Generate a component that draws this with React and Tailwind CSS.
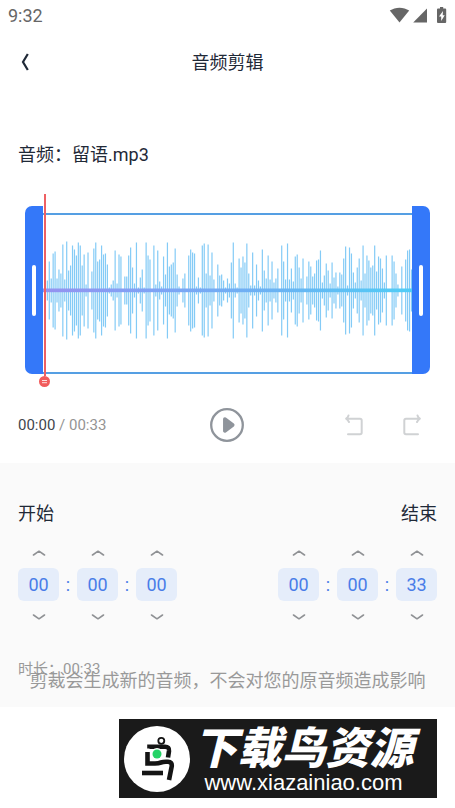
import { useState } from 'react';

// Half-heights of the waveform bars, from the middle line outwards
const WAVE = [
    40, 10, 29, 12, 37, 39, 12, 21, 17, 46, 11, 49, 20, 25, 45, 41, 35, 48, 45, 25,
    36, 6, 38, 1, 19, 42, 48, 29, 31, 45, 36, 37, 26, 3, 6, 10, 40, 7, 36, 34,
    1, 14, 14, 35, 43, 23, 7, 48, 3, 13, 21, 3, 48, 35, 31, 1, 45, 6, 40, 9,
    4, 34, 16, 48, 24, 26, 28, 42, 16, 4, 1, 12, 17, 1, 35, 41, 38, 37, 4, 13,
    3, 45, 47, 17, 46, 15, 38, 11, 1, 26, 15, 16, 10, 3, 12, 7, 28, 48, 7, 3,
    32, 23, 34, 28, 47, 17, 5, 38, 5, 26, 10, 4, 41, 20, 12, 35, 11, 29, 8, 12,
    22, 1, 45, 29, 11, 47, 11, 22, 9, 34, 36, 23, 12, 32, 1, 14, 29, 24, 14, 17,
    30, 31, 40, 8, 15, 27, 20, 7, 28, 13, 18, 4, 18, 16, 32, 44, 5, 43, 37, 18,
    8, 23, 32, 10, 45, 17, 35, 30, 23, 25, 45, 19, 34, 32, 22, 8, 35, 1, 0, 35,
    29, 17, 6, 0, 24, 0, 31, 40, 41, 21, 36, 13, 25,
];

const UNITS = ['时', '分', '秒'];

function StatusBar() {
    return (
        <div className="flex h-8 items-center justify-between px-2 text-[#666666]">
            <span className="text-[18px] leading-6">9:32</span>
            <svg width="58" height="18" viewBox="0 0 58 18" fill="currentColor" aria-hidden="true">
                <path d="M0.8 3.6C6.4 -0.3 14.6 -0.3 20.2 3.6L10.5 15.5Z" />
                <path d="M38 1.500V15.500H24.2Z" />
                <path
                    fillRule="evenodd"
                    d="M51 0h3.200v1.500h2q1 0 1 1V15q0 1-1 1h-7.200q-1 0-1-1V2.500q0-1 1-1h2ZM54 4L50 9.500h2.200v4.500l3.500-5.700h-2Z"
                />
            </svg>
        </div>
    );
}

function Header() {
    return (
        <header className="grid h-[60px] grid-cols-[50px_1fr_50px] items-center">
            <button type="button" aria-label="返回" className="flex h-full items-center justify-center">
                <svg width="10" height="18" viewBox="0 0 10 18" fill="none" stroke="currentColor" strokeWidth="2.2">
                    <path d="M7.800 1L3 9l4.800 8" />
                </svg>
            </button>
            <h1 className="pt-0.5 text-center text-[18px] leading-7">音频剪辑</h1>
        </header>
    );
}

function Handle({ side }) {
    return (
        <button
            type="button"
            aria-label={side === 'left' ? '开始位置' : '结束位置'}
            className={`flex w-[18px] items-center justify-center bg-[#3478f9] ${side === 'left' ? 'rounded-l-[7px]' : 'rounded-r-[7px]'}`}
        >
            <span className="h-[51px] w-1 rounded-full bg-white" />
        </button>
    );
}

function Waveform() {
    return (
        <div className="relative mx-[25px] mt-[37px] flex h-[168px]">
            <Handle side="left" />
            <div className="mt-[7px] flex-1 border-y-2 border-[#559fe3]">
                <svg className="block h-full w-full" viewBox="0 0 369 157" preserveAspectRatio="none" aria-hidden="true">
                    <defs>
                        <linearGradient id="middle" x1="0" x2="1" y1="0" y2="0">
                            <stop offset="0" stopColor="#9592f0" />
                            <stop offset="0.3" stopColor="#7fa3f5" />
                            <stop offset="0.65" stopColor="#69b4f3" />
                            <stop offset="1" stopColor="#50cdf6" />
                        </linearGradient>
                    </defs>
                    {WAVE.map((h, i) => (
                        <rect key={i} x={1.800 + i * 1.937} y={75.500 - h} width="1.2" height={h * 2} fill="#84cbf6" />
                    ))}
                    <rect x="0" y="73.500" width="369" height="3.700" fill="url(#middle)" />
                </svg>
            </div>
            <Handle side="right" />
            {/* Playhead */}
            <div className="absolute -top-3 left-[14px] flex flex-col items-center">
                <span className="h-[182px] w-0.5 bg-[#ee6063]" />
                <svg width="11" height="11" viewBox="0 0 11 11" aria-hidden="true">
                    <circle cx="5.500" cy="5.500" r="5.500" fill="#f15b5b" />
                    <path d="M3 4.500h5M3 6.700h5" stroke="#ffffff" strokeOpacity="0.8" />
                </svg>
            </div>
        </div>
    );
}

function UndoIcon({ className = '' }) {
    return (
        <svg className={className} width="18" height="22" viewBox="0 0 18 22" fill="none" stroke="currentColor" strokeWidth="2" strokeLinecap="round" strokeLinejoin="round">
            <path d="M3.500 1.500Q3 3.500 1.200 4.700Q3 6 4 8M1.500 4.700H15Q16.700 4.700 16.700 6.500V18.500Q16.700 20.300 15 20.300H3" />
        </svg>
    );
}

function Controls() {
    return (
        <div className="mt-[34px] mb-[21px] grid grid-cols-3 items-center px-[18px]">
            <p className="text-[15px] leading-6 text-[#949494]">
                <span className="text-[#3f454d]">00:00</span> / 00:33
            </p>
            <button type="button" aria-label="播放" className="justify-self-center">
                <svg width="34" height="34" viewBox="0 0 34 34">
                    <circle cx="17" cy="17" r="15.800" fill="none" stroke="#8f949b" strokeWidth="2.300" />
                    <path d="M14.800 11L22.800 17L14.800 23Z" fill="#8f949b" stroke="#8f949b" strokeWidth="3.500" strokeLinejoin="round" />
                </svg>
            </button>
            <div className="flex justify-end gap-6 pr-2 text-[#d0d2d4]">
                <button type="button" aria-label="撤销" className="flex size-[34px] items-center justify-center">
                    <UndoIcon />
                </button>
                <button type="button" aria-label="重做" className="flex size-[34px] items-center justify-center">
                    <UndoIcon className="-scale-x-100" />
                </button>
            </div>
        </div>
    );
}

function Chevron({ className = '' }) {
    return (
        <svg className={className} width="14" height="6" viewBox="0 0 14 6" fill="none" stroke="#8f9194" strokeWidth="1.600" strokeLinecap="round" strokeLinejoin="round">
            <path d="M1.500 5L7 1.200L12.500 5" />
        </svg>
    );
}

function TimePicker({ label, initial, align }) {
    const [values, setValues] = useState(initial);

    const setValue = (index, value) => {
        setValues(prev => prev.map((v, i) => (i === index ? value : v)));
    };

    const step = (index, delta) => {
        const next = (Number(values[index]) + delta + 60) % 60;
        setValue(index, String(next).padStart(2, '0'));
    };

    return (
        <section>
            <h2 className={`text-[18px] leading-7 ${align === 'right' ? 'text-right' : 'text-left'}`}>{label}</h2>
            <div className="mt-[9px] flex items-center text-[18px] leading-6 text-[#4a7de8]">
                {values.map((value, i) => (
                    <div key={UNITS[i]} className="flex items-center">
                        {i > 0 && <span className="w-[18px] text-center">:</span>}
                        <div className="flex w-[41px] flex-col">
                            <button type="button" aria-label={`${label}${UNITS[i]}增加`} onClick={() => step(i, 1)} className="flex h-[31px] items-center justify-center">
                                <Chevron />
                            </button>
                            <input
                                type="text"
                                inputMode="numeric"
                                aria-label={`${label}${UNITS[i]}`}
                                value={value}
                                onChange={(e) => setValue(i, e.target.value)}
                                className="h-[33px] w-full rounded-md bg-[#e5edfa] text-center focus:outline-none"
                            />
                            <button type="button" aria-label={`${label}${UNITS[i]}减少`} onClick={() => step(i, -1)} className="flex h-[31px] items-center justify-center">
                                <Chevron className="rotate-180" />
                            </button>
                        </div>
                    </div>
                ))}
            </div>
        </section>
    );
}

function Banner() {
    return (
        <footer className="mt-3 mr-[18px] flex h-[79px] w-[318px] items-center self-end bg-[#1a1a1a] pr-5 pl-[5px] text-white">
            <svg className="shrink-0" width="66" height="66" viewBox="0 0 66 66" aria-hidden="true">
                <circle cx="33" cy="33" r="33" fill="#ffffff" />
                <g fill="none" stroke="#141414">
                    <circle cx="37.300" cy="14.800" r="3" strokeWidth="1.800" />
                    <path d="M25.500 22.500V20.700H41Q45.500 20.700 45 25L44 31.500" strokeWidth="4.600" />
                    <path d="M23.500 26V37.500H31Q34.500 37.500 37 36.500Q39 35.800 42 35.800H44Q48.300 35.800 47.700 40.500L45 54" strokeWidth="4.600" />
                    <path d="M18 47H39" strokeWidth="4.600" />
                </g>
                <circle cx="33" cy="28" r="6" fill="#ffffff" />
                <circle cx="33" cy="28" r="4.500" fill="#25d366" />
            </svg>
            <div className="flex flex-1 flex-col items-center pt-1">
                <strong className="text-[44px] leading-11 font-black italic">下载鸟资源</strong>
                <span className="font-['Liberation_Sans'] text-[22px] leading-6">www.xiazainiao.com</span>
            </div>
        </footer>
    );
}

export default function App() {
    return (
        <div className="flex min-h-screen flex-col bg-white font-[Roboto,'Noto_Sans_CJK_SC',sans-serif] text-[#1f2937]">
            <StatusBar />
            <Header />
            <main>
                <p className="mt-[49px] px-[18px] text-[18px] leading-7">音频：留语.mp3</p>
                <Waveform />
                <Controls />
                <div className="bg-[#fafafa] px-[18px] pt-[37px] pb-3">
                    <div className="flex justify-between">
                        <TimePicker label="开始" initial={['00', '00', '00']} align="left" />
                        <TimePicker label="结束" initial={['00', '00', '33']} align="right" />
                    </div>
                    <p className="mt-[25px] text-[15px] leading-6 text-[#999999]">时长：00:33</p>
                    <p className="-mt-[14px] text-center text-[18px] leading-7 text-[#999999]">剪裁会生成新的音频，不会对您的原音频造成影响</p>
                </div>
            </main>
            <Banner />
        </div>
    );
}
